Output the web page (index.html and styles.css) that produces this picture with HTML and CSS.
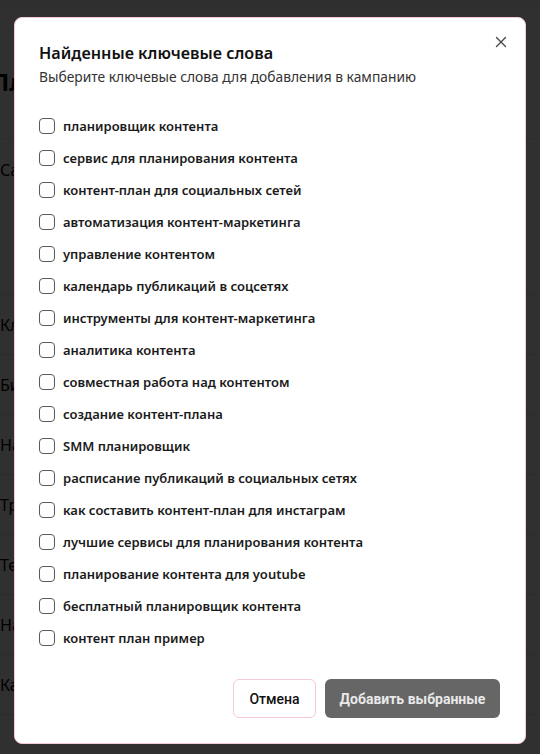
FILE: index.html
```html
<!DOCTYPE html>
<html lang="ru">
<head>
<meta charset="utf-8">
<title>Найденные ключевые слова</title>
<link rel="stylesheet" href="styles.css">
</head>
<body>
<div class="page">
  <div class="page-top"></div>
  <div class="page-head"><h1 class="page-title">Планировщик</h1></div>
  <div class="row row-tall">Сайт и описание</div>
  <div class="row">Ключевые слова</div>
  <div class="row">Бизнес</div>
  <div class="row">Название</div>
  <div class="row">Трафик</div>
  <div class="row">Текст</div>
  <div class="row">Настройки</div>
  <div class="row">Кампания</div>
</div>
<div class="overlay"></div>

<div class="modal" role="dialog" aria-labelledby="mtitle">
  <button class="close" aria-label="Закрыть">
    <svg width="12" height="12" viewBox="0 0 12 12"><path d="M1.5 1.5L10.5 10.5M10.5 1.5L1.5 10.5" stroke="#4a4a4a" stroke-width="1.4" fill="none" stroke-linecap="round"/></svg>
  </button>
  <h2 class="title" id="mtitle">Найденные ключевые слова</h2>
  <p class="subtitle">Выберите ключевые слова для добавления в кампанию</p>
  <ul class="list">
    <li class="item"><span class="box"></span>планировщик контента</li>
    <li class="item"><span class="box"></span>сервис для планирования контента</li>
    <li class="item"><span class="box"></span>контент-план для социальных сетей</li>
    <li class="item"><span class="box"></span>автоматизация контент-маркетинга</li>
    <li class="item"><span class="box"></span>управление контентом</li>
    <li class="item"><span class="box"></span>календарь публикаций в соцсетях</li>
    <li class="item"><span class="box"></span>инструменты для контент-маркетинга</li>
    <li class="item"><span class="box"></span>аналитика контента</li>
    <li class="item"><span class="box"></span>совместная работа над контентом</li>
    <li class="item"><span class="box"></span>создание контент-плана</li>
    <li class="item"><span class="box"></span>SMM планировщик</li>
    <li class="item"><span class="box"></span>расписание публикаций в социальных сетях</li>
    <li class="item"><span class="box"></span>как составить контент-план для инстаграм</li>
    <li class="item"><span class="box"></span>лучшие сервисы для планирования контента</li>
    <li class="item"><span class="box"></span>планирование контента для youtube</li>
    <li class="item"><span class="box"></span>бесплатный планировщик контента</li>
    <li class="item"><span class="box"></span>контент план пример</li>
  </ul>
  <div class="footer">
    <button class="btn btn-cancel">Отмена</button>
    <button class="btn btn-add">Добавить выбранные</button>
  </div>
</div>
</body>
</html>
```

FILE: styles.css
```css
* { box-sizing: border-box; }
html, body { margin: 0; padding: 0; }
body {
  width: 540px;
  height: 754px;
  overflow: hidden;
  background: #ffffff;
  font-family: "Noto Sans", "Open Sans", sans-serif;
  color: #111;
}
.page { width: 540px; }
.page-top { height: 5px; border-bottom: 1px solid #ececec; background: #fafafa; }
.page-head {
  height: 134px;
  border-bottom: 1px solid #ececec;
  display: flex;
  align-items: center;
}
.page-title {
  margin: 0 0 0 -9px;
  font-size: 24px;
  font-weight: 700;
  color: #000;
  position: relative;
  top: 10px;
}
.row {
  height: 60px;
  border-bottom: 1px solid #f0e4e8;
  display: flex;
  align-items: center;
  font-size: 16px;
  color: #000;
}
.row-tall { height: 156px; align-items: flex-start; padding-top: 20px; }

.overlay {
  position: fixed;
  inset: 0;
  background: rgba(0, 0, 0, 0.81);
}

.modal {
  position: fixed;
  left: 14px;
  top: 17px;
  width: 512px;
  height: 727px;
  background: #fff;
  border: 1px solid #f7c9d8;
  border-radius: 8px;
  padding: 23px 25px 25px 24px;
  display: flex;
  flex-direction: column;
}
.close {
  position: absolute;
  top: 18px;
  right: 18px;
  width: 12px;
  height: 12px;
  padding: 0;
  border: 0;
  background: none;
  display: flex;
}
.title {
  margin: 0;
  font-size: 16.2px;
  line-height: 24px;
  font-weight: 600;
  color: #111;
}
.subtitle {
  margin: 2px 0 0;
  font-size: 13.8px;
  line-height: 20px;
  color: #333;
}
.list {
  list-style: none;
  margin: 29px 0 0;
  padding: 0;
  display: flex;
  flex-direction: column;
  gap: 12px;
}
.item {
  height: 20px;
  display: flex;
  align-items: center;
  gap: 8px;
  font-size: 13px;
  font-weight: 600;
  color: #1b1b1b;
}
.box {
  width: 16px;
  height: 16px;
  border: 1px solid #5a5a5a;
  border-radius: 4px;
  flex: none;
}
.footer {
  margin-top: auto;
  display: flex;
  justify-content: flex-end;
  gap: 9px;
}
.btn {
  height: 39px;
  border-radius: 6px;
  font-family: Roboto, "Liberation Sans", sans-serif;
  font-size: 14px;
  font-weight: 500;
  padding: 0;
  white-space: nowrap;
}
.btn-cancel {
  width: 83px;
  background: #fff;
  border: 1px solid #f7c9d8;
  color: #111;
}
.btn-add {
  width: 175px;
  background: #666666;
  border: 0;
  color: #e9e9e9;
  font-weight: 700;
}
```
